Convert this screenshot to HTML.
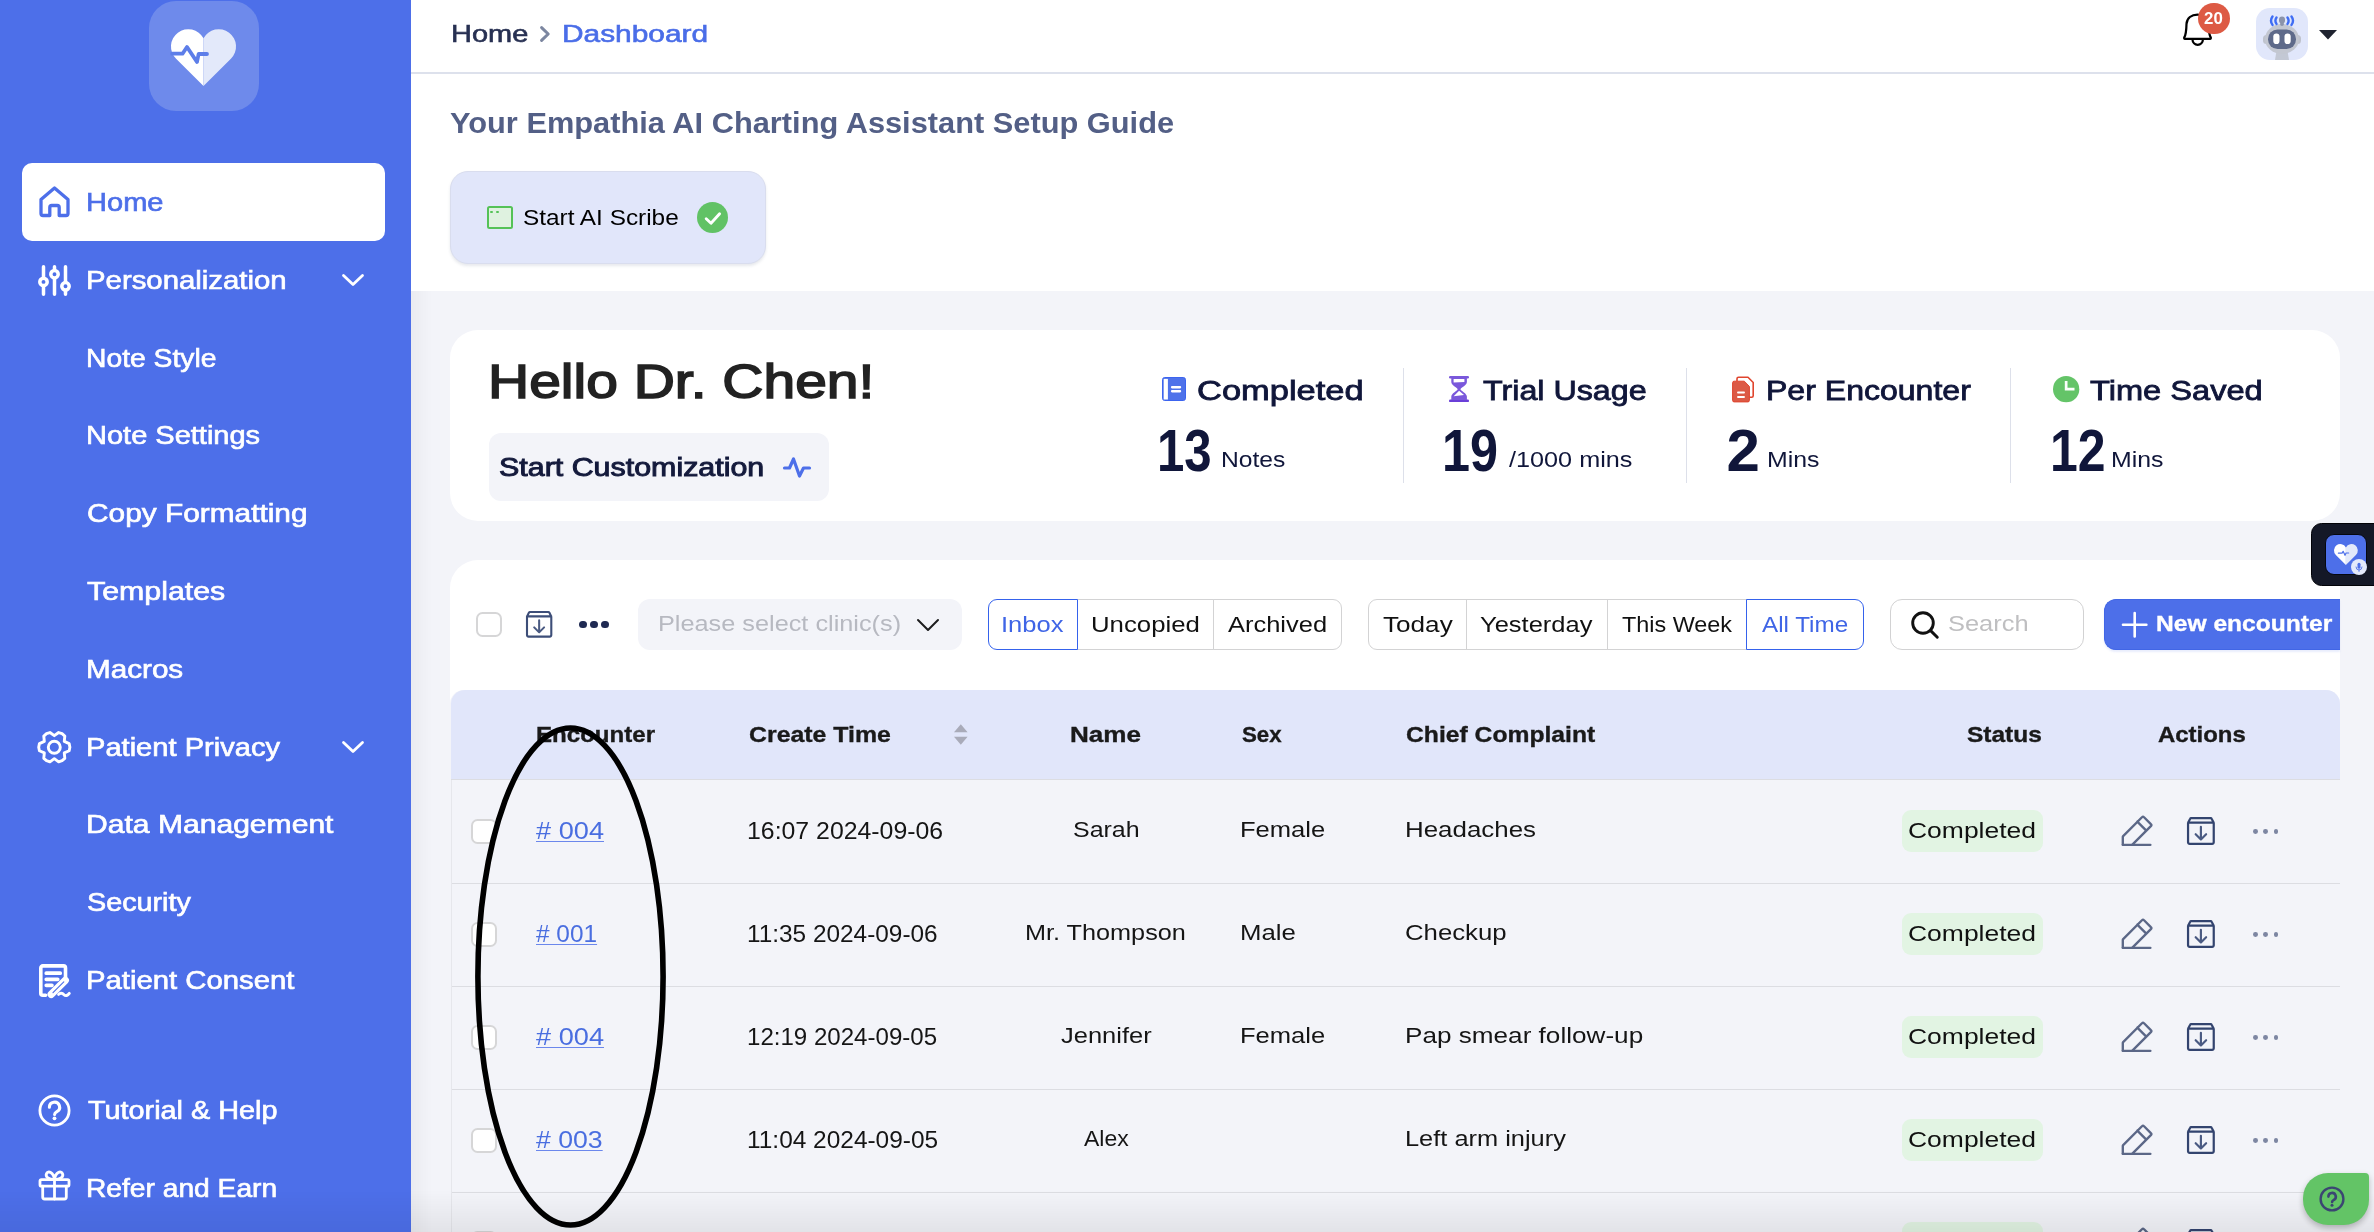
<!DOCTYPE html>
<html lang="en"><head><meta charset="utf-8"><title>Dashboard</title>
<style>
*{box-sizing:border-box;margin:0;padding:0}
html,body{width:2374px;height:1232px;overflow:hidden;background:#f3f4f9;font-family:"Liberation Sans",sans-serif;}
body{position:relative}
.a{position:absolute}
.t{position:absolute;white-space:nowrap;line-height:1;display:block;transform-origin:0 0}
svg{position:absolute;overflow:visible}
.side{left:0;top:0;width:410.8px;height:1232px;background:#4d6fe9}
.cb{position:absolute;width:25.2px;height:25.2px;border:2px solid #d6d6d7;border-radius:6.5px;background:#fff}
.badge{position:absolute;left:1902px;width:141px;height:42px;border-radius:9px;background:#e2f4e3}
.sep{position:absolute;left:451.5px;width:1888.5px;height:1.5px;background:#dcdde2}
.tab{position:absolute;top:599px;height:51px;border:1.9px solid #d3d3d4;background:#fff}
.tab.on{border-color:#3562ec;z-index:2}
.div{position:absolute;top:368px;width:1.3px;height:115px;background:#dde0ea}

#app{position:absolute;left:0;top:0;width:2374px;height:1232px;overflow:hidden;will-change:transform}

</style></head>
<body>
<div id="app">
<div class="a" style="left:410px;top:0;width:1964px;height:291px;background:#fff"></div><div class="a" style="left:410px;top:72px;width:1964px;height:1.5px;background:#dde1ec"></div><div class="a" style="left:410px;top:291px;width:22px;height:941px;background:linear-gradient(90deg,rgba(0,0,0,.035),rgba(0,0,0,0))"></div><div class="a side"></div><div class="a" style="left:148.5px;top:1px;width:110px;height:110px;border-radius:27px;background:#6e8aeb"></div><svg style="left:171px;top:28.5px" width="65" height="57" viewBox="0 0 65 57"><path d="M32.5 57 L5.1 29.8 A17.3 17.3 0 1 1 32.5 9.3 Z" fill="#fff"/><path d="M32.5 57 L59.9 29.8 A17.3 17.3 0 1 0 32.5 9.3 Z" fill="#e3e9fa"/><path d="M1.2 24.7 H11.5 L16 18 L26 33 L27.6 25 H36" fill="none" stroke="#5d7ee9" stroke-width="3.8" stroke-linecap="round" stroke-linejoin="round"/></svg><div class="a" style="left:22px;top:163px;width:363px;height:78px;border-radius:10px;background:#fff"></div><span class="t" style="left:86.12px;top:190.01px;font-size:25.5px;font-weight:400;color:#4d6fe9;transform:scaleX(1.1391);-webkit-text-stroke:0.65px #4d6fe9;">Home</span><span class="t" style="left:86.10px;top:267.81px;font-size:25.5px;font-weight:400;color:#fff;transform:scaleX(1.1509);-webkit-text-stroke:0.65px #fff;">Personalization</span><span class="t" style="left:86.18px;top:345.61px;font-size:25.5px;font-weight:400;color:#fff;transform:scaleX(1.1086);-webkit-text-stroke:0.65px #fff;">Note Style</span><span class="t" style="left:86.13px;top:423.41px;font-size:25.5px;font-weight:400;color:#fff;transform:scaleX(1.1374);-webkit-text-stroke:0.65px #fff;">Note Settings</span><span class="t" style="left:87.23px;top:501.21px;font-size:25.5px;font-weight:400;color:#fff;transform:scaleX(1.1701);-webkit-text-stroke:0.65px #fff;">Copy Formatting</span><span class="t" style="left:87.10px;top:579.01px;font-size:25.5px;font-weight:400;color:#fff;transform:scaleX(1.1891);-webkit-text-stroke:0.65px #fff;">Templates</span><span class="t" style="left:86.07px;top:656.81px;font-size:25.5px;font-weight:400;color:#fff;transform:scaleX(1.1627);-webkit-text-stroke:0.65px #fff;">Macros</span><span class="t" style="left:86.12px;top:734.61px;font-size:25.5px;font-weight:400;color:#fff;transform:scaleX(1.1407);-webkit-text-stroke:0.65px #fff;">Patient Privacy</span><span class="t" style="left:86.04px;top:812.41px;font-size:25.5px;font-weight:400;color:#fff;transform:scaleX(1.1796);-webkit-text-stroke:0.65px #fff;">Data Management</span><span class="t" style="left:87.27px;top:890.21px;font-size:25.5px;font-weight:400;color:#fff;transform:scaleX(1.1274);-webkit-text-stroke:0.65px #fff;">Security</span><span class="t" style="left:86.10px;top:968.01px;font-size:25.5px;font-weight:400;color:#fff;transform:scaleX(1.1485);-webkit-text-stroke:0.65px #fff;">Patient Consent</span><span class="t" style="left:87.70px;top:1098.31px;font-size:25.5px;font-weight:400;color:#fff;transform:scaleX(1.1300);-webkit-text-stroke:0.65px #fff;">Tutorial &amp; Help</span><span class="t" style="left:86.19px;top:1176.11px;font-size:25.5px;font-weight:400;color:#fff;transform:scaleX(1.1051);-webkit-text-stroke:0.65px #fff;">Refer and Earn</span><svg style="left:39px;top:185.5px" width="31" height="31.5" viewBox="0 0 31 31.5"><path d="M2 13.5 L15.5 2 L29 13.5 V27.5 a2 2 0 0 1 -2 2 H20.2 V21.5 a2 2 0 0 0 -2 -2 H12.8 a2 2 0 0 0 -2 2 V29.5 H4 a2 2 0 0 1 -2 -2 Z" fill="none" stroke="#4d6fe9" stroke-width="3.3" stroke-linejoin="round" stroke-linecap="round"/></svg><svg style="left:38px;top:264.5px" width="33" height="31" viewBox="0 0 33 31" fill="none" stroke="#fff" stroke-width="3.5" stroke-linecap="round"><path d="M5.5 1.8V12.4M5.5 21.4V29.2M16.5 1.8V4.6M16.5 13.8V29.2M27.5 1.8V16.8M27.5 25.8V29.2"/><circle cx="5.5" cy="16.9" r="3.7"/><circle cx="16.5" cy="9.2" r="3.7"/><circle cx="27.5" cy="21.3" r="3.7"/></svg><svg style="left:342px;top:273.7px" width="22" height="12" viewBox="0 0 22 12"><path d="M1.5 1.5 L11 10.5 L20.5 1.5" fill="none" stroke="#fff" stroke-width="2.8" stroke-linecap="round" stroke-linejoin="round"/></svg><svg style="left:342px;top:740.5px" width="22" height="12" viewBox="0 0 22 12"><path d="M1.5 1.5 L11 10.5 L20.5 1.5" fill="none" stroke="#fff" stroke-width="2.8" stroke-linecap="round" stroke-linejoin="round"/></svg><svg style="left:36.9px;top:730.8px" width="34.6" height="32.4" viewBox="0 0 34.6 32.4" fill="none" stroke="#fff" stroke-width="2.9" stroke-linejoin="round"><path d="M32.18 12.63 L32.90 16.20 L32.18 19.77 L27.26 21.95 L27.83 27.30 L25.10 29.71 L21.65 30.87 L17.30 27.70 L12.95 30.87 L9.50 29.71 L6.77 27.30 L7.34 21.95 L2.42 19.77 L1.70 16.20 L2.42 12.63 L7.34 10.45 L6.77 5.10 L9.50 2.69 L12.95 1.53 L17.30 4.70 L21.65 1.53 L25.10 2.69 L27.83 5.10 L27.26 10.45Z"/><circle cx="17.30" cy="16.20" r="6"/></svg><svg style="left:38.9px;top:963.9px" width="32" height="35" viewBox="0 0 32 35" fill="none" stroke="#fff" stroke-linecap="round" stroke-linejoin="round"><path d="M6.6 31.2 H3.8 a2 2 0 0 1 -2 -2 V3.9 a2 2 0 0 1 2 -2 H24.5 a2 2 0 0 1 2 2 V13.6" stroke-width="3.6"/><path d="M7.3 9.2 H21.2 M7.3 15.3 H18.7 M7.3 21.3 H12.9" stroke-width="3.8"/><path d="M26.3 16.3 L12.2 30.4" stroke-width="7.3"/><path d="M24.8 17.8 L14 28.6" stroke="#4d6fe9" stroke-width="1.1"/><path d="M19.6 30.4 C21 28.8 23.3 28.9 25 30.7 C26.7 32.4 28.6 31.6 30.3 29.3" stroke-width="2.9"/></svg><svg style="left:38px;top:1094px" width="33" height="33" viewBox="0 0 33 33" fill="none" stroke="#fff" stroke-linecap="round"><circle cx="16.5" cy="16.5" r="14.6" stroke-width="2.8"/><path d="M11.4 13.2 A5.1 5.1 0 1 1 18.9 17.7 Q16.6 19 16.6 20.4" stroke-width="3.1"/><circle cx="16.5" cy="24.3" r="1.9" fill="#fff" stroke="none"/></svg><svg style="left:38px;top:1170.4px" width="33" height="33" viewBox="0 0 33 33" fill="none" stroke="#fff" stroke-width="2.8" stroke-linejoin="round" stroke-linecap="round"><rect x="2" y="9.6" width="29" height="6.6" rx="1.5"/><path d="M4.7 16.2 V27 a2 2 0 0 0 2 2 H26.3 a2 2 0 0 0 2 -2 V16.2"/><path d="M16.5 9.6 V29"/><path d="M16.5 9.6 C11 9.6 7 7 8.5 3.6 C10 0.4 15.5 1.8 16.5 9.6 C17.5 1.8 23 0.4 24.5 3.6 C26 7 22 9.6 16.5 9.6Z"/></svg><span class="t" style="left:450.79px;top:21.78px;font-size:24px;font-weight:400;color:#273052;transform:scaleX(1.2063);-webkit-text-stroke:0.6px #273052;">Home</span><svg style="left:540.2px;top:25.6px" width="10" height="16" viewBox="0 0 10 16"><path d="M1.6 1.6 L8.2 8 L1.6 14.4" fill="none" stroke="#7c86a0" stroke-width="3" stroke-linecap="round" stroke-linejoin="round"/></svg><span class="t" style="left:562.16px;top:21.78px;font-size:24px;font-weight:400;color:#4a6de8;transform:scaleX(1.2437);-webkit-text-stroke:0.6px #4a6de8;">Dashboard</span><svg style="left:2183px;top:13px" width="30" height="33" viewBox="0 0 30 33" fill="none" stroke="#000" stroke-width="2.25" stroke-linecap="round" stroke-linejoin="round"><path d="M2 25.9 C1.2 25.9 0.9 25 1.4 24.2 C3.2 21 3.4 15 3.5 11 C3.8 5 8.5 1.5 14.5 1.5 C20.5 1.5 25.2 5 25.5 11 C25.6 15 25.8 21 27.6 24.2 C28.1 25 27.8 25.9 27 25.9 Z"/><path d="M9.5 26.6 a5.2 5.2 0 0 0 10.4 0"/></svg><div class="a" style="left:2198.1px;top:2.5px;width:31.6px;height:31.6px;border-radius:50%;background:#dd5a44"></div><span class="t" style="left:2204.40px;top:10.11px;font-size:17px;font-weight:700;color:#fff;transform:scaleX(0.9916);">20</span><div class="a" style="left:2256px;top:7.5px;width:52px;height:52px;border-radius:14px;background:#e1e7fb;overflow:hidden"><svg style="left:0;top:0" width="52" height="52" viewBox="0 0 52 52"><path d="M19 52 L20.5 43 H31.5 L33 52Z" fill="#c3c8d4"/><rect x="7" y="27" width="38" height="9" rx="3.5" fill="#bfc3cd"/><ellipse cx="26" cy="31" rx="17" ry="15" fill="#c3c7d1"/><rect x="12" y="21.5" width="28" height="19.5" rx="9.5" fill="#5e6a8a"/><rect x="17.3" y="25.5" width="6.2" height="10.5" rx="3.1" fill="#fff"/><rect x="28.5" y="25.5" width="6.2" height="10.5" rx="3.1" fill="#fff"/><rect x="24.2" y="9" width="3.6" height="9" rx="1.8" fill="#8b93aa"/><rect x="23" y="8.5" width="6" height="7" rx="3" fill="#8b93aa"/><path d="M20.5 9.5 q-2.2 3.2 0 6.4 M16.5 8.5 q-3 4.2 0 8.4 M31.5 9.5 q2.2 3.2 0 6.4 M35.5 8.5 q3 4.2 0 8.4" fill="none" stroke="#3f6df4" stroke-width="2.4" stroke-linecap="round"/></svg></div><svg style="left:2318.5px;top:29.8px" width="18" height="9.5" viewBox="0 0 18 9.5"><path d="M0 0 H18 L9 9.5Z" fill="#1f2330"/></svg><span class="t" style="left:450.40px;top:108.55px;font-size:29px;font-weight:700;color:#535f86;transform:scaleX(1.0615);">Your Empathia AI Charting Assistant Setup Guide</span><div class="a" style="left:450px;top:171px;width:316px;height:93px;border-radius:18px;background:#e1e6fa;border:1px solid #d9ddee;box-shadow:0 2px 3px rgba(60,70,110,.12)"></div><div class="a" style="left:487.2px;top:206.4px;width:26.1px;height:22.2px;border:2.1px solid #55c257;border-radius:2.5px;background:#dff2e0"></div><div class="a" style="left:490.4px;top:210.7px;width:2.6px;height:2.4px;border-radius:1px;background:#55c257"></div><div class="a" style="left:496.2px;top:210.7px;width:2.6px;height:2.4px;border-radius:1px;background:#55c257"></div><span class="t" style="left:522.79px;top:206.88px;font-size:22px;font-weight:400;color:#000;transform:scaleX(1.1074);">Start AI Scribe</span><div class="a" style="left:696.7px;top:201.7px;width:31.8px;height:31.8px;border-radius:50%;background:#61c265"></div><svg style="left:696.7px;top:201.7px" width="32" height="32" viewBox="0 0 32 32"><path d="M9.2 16.8 L14 21.2 L22.6 11.8" fill="none" stroke="#fff" stroke-width="2.9" stroke-linecap="round" stroke-linejoin="round"/></svg><div class="a" style="left:450px;top:329.5px;width:1890px;height:191px;border-radius:28px;background:#fff"></div><span class="t" style="left:487.65px;top:357.22px;font-size:49px;font-weight:400;color:#222;transform:scaleX(1.1628);-webkit-text-stroke:1.6px #222;">Hello Dr. Chen!</span><div class="a" style="left:489px;top:433.3px;width:340px;height:68px;border-radius:12px;background:#f3f4f9"></div><span class="t" style="left:498.73px;top:453.89px;font-size:26px;font-weight:400;color:#141a3c;transform:scaleX(1.1693);-webkit-text-stroke:0.95px #141a3c;">Start Customization</span><svg style="left:783px;top:457px" width="28" height="21" viewBox="0 0 28 21"><path d="M1.5 11 H6.5 L10.5 2 L16.5 19 L20.5 11 H26.5" fill="none" stroke="#4d6fe9" stroke-width="3.2" stroke-linecap="round" stroke-linejoin="round"/></svg><div class="div" style="left:1402.6px"></div><div class="div" style="left:1686px"></div><div class="div" style="left:2009.8px"></div><span class="t" style="left:1196.95px;top:377.02px;font-size:27.5px;font-weight:400;color:#10163a;transform:scaleX(1.2533);-webkit-text-stroke:0.8px #10163a;">Completed</span><span class="t" style="left:1483.00px;top:377.02px;font-size:27.5px;font-weight:400;color:#10163a;transform:scaleX(1.1724);-webkit-text-stroke:0.8px #10163a;">Trial Usage</span><span class="t" style="left:1765.67px;top:377.02px;font-size:27.5px;font-weight:400;color:#10163a;transform:scaleX(1.1651);-webkit-text-stroke:0.8px #10163a;">Per Encounter</span><span class="t" style="left:2090.40px;top:377.02px;font-size:27.5px;font-weight:400;color:#10163a;transform:scaleX(1.1855);-webkit-text-stroke:0.8px #10163a;">Time Saved</span><span class="t" style="left:1157.34px;top:420.51px;font-size:60px;font-weight:700;color:#10163a;transform:scaleX(0.8193);">13</span><span class="t" style="left:1442.18px;top:420.51px;font-size:60px;font-weight:700;color:#10163a;transform:scaleX(0.8386);">19</span><span class="t" style="left:1726.40px;top:420.51px;font-size:60px;font-weight:700;color:#10163a;">2</span><span class="t" style="left:2049.50px;top:420.51px;font-size:60px;font-weight:700;color:#10163a;transform:scaleX(0.8327);">12</span><span class="t" style="left:1221.10px;top:448.85px;font-size:22.5px;font-weight:400;color:#10163a;transform:scaleX(1.0951);">Notes</span><span class="t" style="left:1509.10px;top:448.85px;font-size:22.5px;font-weight:400;color:#10163a;transform:scaleX(1.1210);">/1000 mins</span><span class="t" style="left:1766.50px;top:448.85px;font-size:22.5px;font-weight:400;color:#10163a;transform:scaleX(1.1047);">Mins</span><span class="t" style="left:2111.10px;top:448.85px;font-size:22.5px;font-weight:400;color:#10163a;transform:scaleX(1.1047);">Mins</span><svg style="left:1162px;top:377.2px" width="24" height="24" viewBox="0 0 24 24"><rect x="0.5" y="0.5" width="23" height="23" rx="2.2" fill="#4e72ea" stroke="#3c64ef" stroke-width="1"/><rect x="1.7" y="1.9" width="4.2" height="20.6" fill="#fff"/><rect x="8.9" y="9.1" width="10.3" height="2.3" rx="1.1" fill="#fff"/><rect x="8.9" y="13.1" width="10.3" height="2.3" rx="1.1" fill="#fff"/></svg><svg style="left:1449.1px;top:376px" width="20" height="26.1" viewBox="0 0 20 26.1"><rect x="0" y="0" width="20" height="2.5" rx="1.2" fill="#7a58db"/><rect x="0" y="23.6" width="20" height="2.5" rx="1.2" fill="#6a3fd8"/><path d="M2.3 2 H17.9 V6 C17.9 9.2 12.2 11.6 11.4 13.2 C12.2 14.9 17.9 17.4 17.9 20.6 V24 H2.3 V20.6 C2.3 17.4 8 14.9 8.7 13.2 C8 11.6 2.3 9.2 2.3 6 Z" fill="#7a58db"/><path d="M4.6 3 H15.4 V6 L4.6 6.6 Z" fill="#fff"/><path d="M10.1 14.8 L15 19 L4.6 20.2 Z" fill="#fff"/></svg><svg style="left:1732px;top:376px" width="22.5" height="26.5" viewBox="0 0 22.5 26.5"><path d="M5 5 V2.7 a1.5 1.5 0 0 1 1.5 -1.5 H16 L21.2 6.5 V19.7 a1.5 1.5 0 0 1 -1.5 1.5 H17.5" fill="none" stroke="#e0452e" stroke-width="1.6" stroke-linejoin="round"/><path d="M0.6 6.7 a1.5 1.5 0 0 1 1.5 -1.5 H12.3 L17.4 10.4 V24.4 a1.5 1.5 0 0 1 -1.5 1.5 H2.1 a1.5 1.5 0 0 1 -1.5 -1.5Z" fill="#dc5a46" stroke="#e0452e" stroke-width="1"/><rect x="5.1" y="15.5" width="7.8" height="2.1" rx="0.8" fill="#fff"/><rect x="5.1" y="19.9" width="7.8" height="2.1" rx="0.8" fill="#fff"/></svg><svg style="left:2053.3px;top:376.2px" width="26.3" height="26.3" viewBox="0 0 26.3 26.3"><circle cx="13.15" cy="13.15" r="13.15" fill="#64c468"/><path d="M11.8 5 H14.5 V11.8 H21.5 V14.5 H11.8Z" fill="#fbfffb"/></svg><div class="a" style="left:450px;top:560px;width:1890px;height:700px;border-radius:28px 28px 0 0;background:#fff"></div><div class="a" style="left:450px;top:690px;width:1890px;height:560px;border-radius:14px 14px 0 0;background:#f3f4f9"></div><div class="a" style="left:451px;top:690px;width:1889px;height:90px;border-radius:14px 14px 0 0;background:#e1e6fa;border-bottom:1.5px solid #dcdde2"></div><div class="a" style="left:450.6px;top:780px;width:1.2px;height:460px;background:#e6e7ec"></div><div class="cb" style="left:476.4px;top:611.7px"></div><svg style="left:526px;top:611.2px" width="26.3" height="26.6" viewBox="0 0 26.3 26.6"><path d="M1 5.4 H25.3 V24.1 a1.5 1.5 0 0 1 -1.5 1.5 H2.5 a1.5 1.5 0 0 1 -1.5 -1.5Z M1 5.4 L3 1.6 a1 1 0 0 1 .9 -.6 H22.4 a1 1 0 0 1 .9 .6 L25.3 5.4" fill="none" stroke="#3d4e78" stroke-width="2.1" stroke-linejoin="round"/><path d="M13.15 9.3 V21.2 M8.2 16.4 L13.15 21.4 L18.1 16.4" fill="none" stroke="#4a5a82" stroke-width="2.05" stroke-linecap="round" stroke-linejoin="round"/></svg><div class="a" style="left:579.2px;top:620.5px;width:7.8px;height:7.8px;border-radius:50%;background:#1f2a52"></div><div class="a" style="left:590.2px;top:620.5px;width:7.8px;height:7.8px;border-radius:50%;background:#1f2a52"></div><div class="a" style="left:601.4px;top:620.5px;width:7.8px;height:7.8px;border-radius:50%;background:#1f2a52"></div><div class="a" style="left:638px;top:598.8px;width:324px;height:51.5px;border-radius:12px;background:#f3f4f9"></div><span class="t" style="left:658.25px;top:613.28px;font-size:22px;font-weight:400;color:#b7b9c1;transform:scaleX(1.1492);">Please select clinic(s)</span><svg style="left:917.4px;top:619.3px" width="22" height="12" viewBox="0 0 22 12"><path d="M1 1 L11 11 L21 1" fill="none" stroke="#1d1d1f" stroke-width="2" stroke-linecap="round" stroke-linejoin="round"/></svg><div class="tab" style="left:1077px;width:137.5px;border-left:none"></div><div class="tab" style="left:1213px;width:128.5px;border-radius:0 9px 9px 0"></div><div class="tab on" style="left:988.4px;width:90px;border-radius:9px 0 0 9px"></div><span class="t" style="left:1000.78px;top:613.88px;font-size:22px;font-weight:400;color:#3f65e6;transform:scaleX(1.1598);z-index:3;">Inbox</span><span class="t" style="left:1091.03px;top:613.88px;font-size:22px;font-weight:400;color:#111;transform:scaleX(1.1707);z-index:3;">Uncopied</span><span class="t" style="left:1228.00px;top:613.88px;font-size:22px;font-weight:400;color:#111;transform:scaleX(1.1570);z-index:3;">Archived</span><div class="tab" style="left:1368.3px;width:99px;border-radius:9px 0 0 9px"></div><div class="tab" style="left:1466px;width:142px;border-left-width:1.5px"></div><div class="tab" style="left:1606.5px;width:141px"></div><div class="tab on" style="left:1746.2px;width:118.1px;border-radius:0 9px 9px 0"></div><span class="t" style="left:1382.70px;top:613.88px;font-size:22px;font-weight:400;color:#111;transform:scaleX(1.1873);z-index:3;">Today</span><span class="t" style="left:1480.20px;top:613.88px;font-size:22px;font-weight:400;color:#111;transform:scaleX(1.1584);z-index:3;">Yesterday</span><span class="t" style="left:1621.80px;top:613.88px;font-size:22px;font-weight:400;color:#111;transform:scaleX(1.0630);z-index:3;">This Week</span><span class="t" style="left:1761.60px;top:613.88px;font-size:22px;font-weight:400;color:#3f65e6;transform:scaleX(1.1008);z-index:3;">All Time</span><div class="a" style="left:1890px;top:599px;width:194px;height:51px;border-radius:12px;border:1.9px solid #d2d2d3;background:#fff"></div><svg style="left:1911.3px;top:611.3px" width="28" height="28" viewBox="0 0 28 28" fill="none" stroke="#111" stroke-width="2.9" stroke-linecap="round"><circle cx="12" cy="12" r="10.3"/><path d="M19.6 19.6 L26.3 26.3"/></svg><span class="t" style="left:1947.74px;top:613.38px;font-size:22px;font-weight:400;color:#bfbfc1;transform:scaleX(1.1561);">Search</span><div class="a" style="left:2104px;top:599px;width:236px;height:51px;border-radius:12px 0 0 12px;background:#4d6fe9;border:1.2px solid #4166e6;border-right:none;box-shadow:0 2px 2px rgba(77,111,233,.12)"></div><svg style="left:2121.8px;top:612.2px" width="25.4" height="25.4" viewBox="0 0 25.4 25.4"><path d="M12.7 1 V24.4 M1 12.7 H24.4" fill="none" stroke="#fff" stroke-width="2.6" stroke-linecap="round"/></svg><span class="t" style="left:2156.38px;top:612.98px;font-size:22px;font-weight:700;color:#fff;transform:scaleX(1.1175);-webkit-text-stroke:0.35px #fff;">New encounter</span><span class="t" style="left:535.91px;top:723.88px;font-size:22px;font-weight:700;color:#1a1a1a;transform:scaleX(1.0940);-webkit-text-stroke:0.35px #1a1a1a;">Encounter</span><span class="t" style="left:748.50px;top:723.88px;font-size:22px;font-weight:700;color:#1a1a1a;transform:scaleX(1.1300);-webkit-text-stroke:0.35px #1a1a1a;">Create Time</span><span class="t" style="left:1069.61px;top:723.88px;font-size:22px;font-weight:700;color:#1a1a1a;transform:scaleX(1.1860);-webkit-text-stroke:0.35px #1a1a1a;">Name</span><span class="t" style="left:1241.50px;top:723.88px;font-size:22px;font-weight:700;color:#1a1a1a;transform:scaleX(1.0123);-webkit-text-stroke:0.35px #1a1a1a;">Sex</span><span class="t" style="left:1406.00px;top:723.88px;font-size:22px;font-weight:700;color:#1a1a1a;transform:scaleX(1.1220);-webkit-text-stroke:0.35px #1a1a1a;">Chief Complaint</span><span class="t" style="left:1967.40px;top:723.88px;font-size:22px;font-weight:700;color:#1a1a1a;transform:scaleX(1.1134);-webkit-text-stroke:0.35px #1a1a1a;">Status</span><span class="t" style="left:2157.50px;top:723.88px;font-size:22px;font-weight:700;color:#1a1a1a;transform:scaleX(1.0878);-webkit-text-stroke:0.35px #1a1a1a;">Actions</span><svg style="left:953.7px;top:723.9px" width="13.6" height="21" viewBox="0 0 14 21"><path d="M7 0 L14 8.2 H0Z" fill="#a9abb9"/><path d="M7 21 L14 12.8 H0Z" fill="#a9abb9"/></svg><div class="cb" style="left:471.4px;top:818.7px"></div><span class="t" style="left:536.20px;top:819.28px;font-size:24px;font-weight:400;color:#4a6ee0;transform:scaleX(1.1321);text-decoration:underline;text-decoration-thickness:1.3px;text-underline-offset:2px;text-decoration-color:#6b87ec;"># 004</span><span class="t" style="left:747.44px;top:819.51px;font-size:23.5px;font-weight:400;color:#151515;transform:scaleX(1.0571);">16:07 2024-09-06</span><span class="t" style="left:1072.90px;top:820.30px;font-size:21.5px;font-weight:400;color:#151515;transform:scaleX(1.1610);">Sarah</span><span class="t" style="left:1240.31px;top:820.30px;font-size:21.5px;font-weight:400;color:#151515;transform:scaleX(1.1888);">Female</span><span class="t" style="left:1404.80px;top:820.30px;font-size:21.5px;font-weight:400;color:#151515;transform:scaleX(1.2044);">Headaches</span><div class="badge" style="top:809.8px"></div><span class="t" style="left:1908.40px;top:820.48px;font-size:22px;font-weight:400;color:#111;transform:scaleX(1.2030);">Completed</span><svg style="left:2120.5px;top:814.8px" width="32" height="31" viewBox="0 0 32 31"><path d="M1.8 29.8 H29.4" fill="none" stroke="#5b6787" stroke-width="2.35" stroke-linecap="round"/><path d="M1.8 29.6 V22 a1.2 1.2 0 0 1 .35 -.85 L21.2 2 a1.1 1.1 0 0 1 1.6 0 L30.1 9.3 a1.1 1.1 0 0 1 0 1.6 L11.4 29.6 M16.3 6.6 L25.3 15.6" fill="none" stroke="#5b6787" stroke-width="2.35" stroke-linejoin="round" stroke-linecap="round"/></svg><svg style="left:2187.2px;top:817.2px" width="27.8" height="27.9" viewBox="0 0 26.3 26.6" preserveAspectRatio="none"><path d="M1 5.4 H25.3 V24.1 a1.5 1.5 0 0 1 -1.5 1.5 H2.5 a1.5 1.5 0 0 1 -1.5 -1.5Z M1 5.4 L3 1.6 a1 1 0 0 1 .9 -.6 H22.4 a1 1 0 0 1 .9 .6 L25.3 5.4" fill="none" stroke="#33446f" stroke-width="2.1" stroke-linejoin="round"/><path d="M13.15 9.3 V21.2 M8.2 16.4 L13.15 21.4 L18.1 16.4" fill="none" stroke="#4a5a82" stroke-width="2.05" stroke-linecap="round" stroke-linejoin="round"/></svg><div class="a" style="left:2253.0px;top:828.9px;width:4.8px;height:4.8px;border-radius:50%;background:#7d86a2"></div><div class="a" style="left:2263.4px;top:828.9px;width:4.8px;height:4.8px;border-radius:50%;background:#7d86a2"></div><div class="a" style="left:2273.7px;top:828.9px;width:4.8px;height:4.8px;border-radius:50%;background:#7d86a2"></div><div class="sep" style="top:882.7px"></div><div class="cb" style="left:471.4px;top:921.7px"></div><span class="t" style="left:536.20px;top:922.28px;font-size:24px;font-weight:400;color:#4a6ee0;transform:scaleX(1.0166);text-decoration:underline;text-decoration-thickness:1.3px;text-underline-offset:2px;text-decoration-color:#6b87ec;"># 001</span><span class="t" style="left:747.46px;top:922.51px;font-size:23.5px;font-weight:400;color:#151515;transform:scaleX(1.0370);">11:35 2024-09-06</span><span class="t" style="left:1024.83px;top:923.30px;font-size:21.5px;font-weight:400;color:#151515;transform:scaleX(1.1739);">Mr. Thompson</span><span class="t" style="left:1240.30px;top:923.30px;font-size:21.5px;font-weight:400;color:#151515;transform:scaleX(1.1984);">Male</span><span class="t" style="left:1404.80px;top:923.30px;font-size:21.5px;font-weight:400;color:#151515;transform:scaleX(1.1979);">Checkup</span><div class="badge" style="top:912.8px"></div><span class="t" style="left:1908.40px;top:923.48px;font-size:22px;font-weight:400;color:#111;transform:scaleX(1.2030);">Completed</span><svg style="left:2120.5px;top:917.8px" width="32" height="31" viewBox="0 0 32 31"><path d="M1.8 29.8 H29.4" fill="none" stroke="#5b6787" stroke-width="2.35" stroke-linecap="round"/><path d="M1.8 29.6 V22 a1.2 1.2 0 0 1 .35 -.85 L21.2 2 a1.1 1.1 0 0 1 1.6 0 L30.1 9.3 a1.1 1.1 0 0 1 0 1.6 L11.4 29.6 M16.3 6.6 L25.3 15.6" fill="none" stroke="#5b6787" stroke-width="2.35" stroke-linejoin="round" stroke-linecap="round"/></svg><svg style="left:2187.2px;top:920.2px" width="27.8" height="27.9" viewBox="0 0 26.3 26.6" preserveAspectRatio="none"><path d="M1 5.4 H25.3 V24.1 a1.5 1.5 0 0 1 -1.5 1.5 H2.5 a1.5 1.5 0 0 1 -1.5 -1.5Z M1 5.4 L3 1.6 a1 1 0 0 1 .9 -.6 H22.4 a1 1 0 0 1 .9 .6 L25.3 5.4" fill="none" stroke="#33446f" stroke-width="2.1" stroke-linejoin="round"/><path d="M13.15 9.3 V21.2 M8.2 16.4 L13.15 21.4 L18.1 16.4" fill="none" stroke="#4a5a82" stroke-width="2.05" stroke-linecap="round" stroke-linejoin="round"/></svg><div class="a" style="left:2253.0px;top:931.9px;width:4.8px;height:4.8px;border-radius:50%;background:#7d86a2"></div><div class="a" style="left:2263.4px;top:931.9px;width:4.8px;height:4.8px;border-radius:50%;background:#7d86a2"></div><div class="a" style="left:2273.7px;top:931.9px;width:4.8px;height:4.8px;border-radius:50%;background:#7d86a2"></div><div class="sep" style="top:985.7px"></div><div class="cb" style="left:471.4px;top:1024.7px"></div><span class="t" style="left:536.20px;top:1025.28px;font-size:24px;font-weight:400;color:#4a6ee0;transform:scaleX(1.1321);text-decoration:underline;text-decoration-thickness:1.3px;text-underline-offset:2px;text-decoration-color:#6b87ec;"># 004</span><span class="t" style="left:747.48px;top:1025.51px;font-size:23.5px;font-weight:400;color:#151515;transform:scaleX(1.0245);">12:19 2024-09-05</span><span class="t" style="left:1060.50px;top:1026.30px;font-size:21.5px;font-weight:400;color:#151515;transform:scaleX(1.1857);">Jennifer</span><span class="t" style="left:1240.31px;top:1026.30px;font-size:21.5px;font-weight:400;color:#151515;transform:scaleX(1.1888);">Female</span><span class="t" style="left:1404.78px;top:1026.30px;font-size:21.5px;font-weight:400;color:#151515;transform:scaleX(1.2153);">Pap smear follow-up</span><div class="badge" style="top:1015.8px"></div><span class="t" style="left:1908.40px;top:1026.48px;font-size:22px;font-weight:400;color:#111;transform:scaleX(1.2030);">Completed</span><svg style="left:2120.5px;top:1020.8px" width="32" height="31" viewBox="0 0 32 31"><path d="M1.8 29.8 H29.4" fill="none" stroke="#5b6787" stroke-width="2.35" stroke-linecap="round"/><path d="M1.8 29.6 V22 a1.2 1.2 0 0 1 .35 -.85 L21.2 2 a1.1 1.1 0 0 1 1.6 0 L30.1 9.3 a1.1 1.1 0 0 1 0 1.6 L11.4 29.6 M16.3 6.6 L25.3 15.6" fill="none" stroke="#5b6787" stroke-width="2.35" stroke-linejoin="round" stroke-linecap="round"/></svg><svg style="left:2187.2px;top:1023.2px" width="27.8" height="27.9" viewBox="0 0 26.3 26.6" preserveAspectRatio="none"><path d="M1 5.4 H25.3 V24.1 a1.5 1.5 0 0 1 -1.5 1.5 H2.5 a1.5 1.5 0 0 1 -1.5 -1.5Z M1 5.4 L3 1.6 a1 1 0 0 1 .9 -.6 H22.4 a1 1 0 0 1 .9 .6 L25.3 5.4" fill="none" stroke="#33446f" stroke-width="2.1" stroke-linejoin="round"/><path d="M13.15 9.3 V21.2 M8.2 16.4 L13.15 21.4 L18.1 16.4" fill="none" stroke="#4a5a82" stroke-width="2.05" stroke-linecap="round" stroke-linejoin="round"/></svg><div class="a" style="left:2253.0px;top:1034.9px;width:4.8px;height:4.8px;border-radius:50%;background:#7d86a2"></div><div class="a" style="left:2263.4px;top:1034.9px;width:4.8px;height:4.8px;border-radius:50%;background:#7d86a2"></div><div class="a" style="left:2273.7px;top:1034.9px;width:4.8px;height:4.8px;border-radius:50%;background:#7d86a2"></div><div class="sep" style="top:1088.7px"></div><div class="cb" style="left:471.4px;top:1127.7px"></div><span class="t" style="left:536.20px;top:1128.28px;font-size:24px;font-weight:400;color:#4a6ee0;transform:scaleX(1.1103);text-decoration:underline;text-decoration-thickness:1.3px;text-underline-offset:2px;text-decoration-color:#6b87ec;"># 003</span><span class="t" style="left:747.46px;top:1128.51px;font-size:23.5px;font-weight:400;color:#151515;transform:scaleX(1.0398);">11:04 2024-09-05</span><span class="t" style="left:1083.50px;top:1129.30px;font-size:21.5px;font-weight:400;color:#151515;transform:scaleX(1.0695);">Alex</span><span class="t" style="left:1404.82px;top:1129.30px;font-size:21.5px;font-weight:400;color:#151515;transform:scaleX(1.1811);">Left arm injury</span><div class="badge" style="top:1118.8px"></div><span class="t" style="left:1908.40px;top:1129.48px;font-size:22px;font-weight:400;color:#111;transform:scaleX(1.2030);">Completed</span><svg style="left:2120.5px;top:1123.8px" width="32" height="31" viewBox="0 0 32 31"><path d="M1.8 29.8 H29.4" fill="none" stroke="#5b6787" stroke-width="2.35" stroke-linecap="round"/><path d="M1.8 29.6 V22 a1.2 1.2 0 0 1 .35 -.85 L21.2 2 a1.1 1.1 0 0 1 1.6 0 L30.1 9.3 a1.1 1.1 0 0 1 0 1.6 L11.4 29.6 M16.3 6.6 L25.3 15.6" fill="none" stroke="#5b6787" stroke-width="2.35" stroke-linejoin="round" stroke-linecap="round"/></svg><svg style="left:2187.2px;top:1126.2px" width="27.8" height="27.9" viewBox="0 0 26.3 26.6" preserveAspectRatio="none"><path d="M1 5.4 H25.3 V24.1 a1.5 1.5 0 0 1 -1.5 1.5 H2.5 a1.5 1.5 0 0 1 -1.5 -1.5Z M1 5.4 L3 1.6 a1 1 0 0 1 .9 -.6 H22.4 a1 1 0 0 1 .9 .6 L25.3 5.4" fill="none" stroke="#33446f" stroke-width="2.1" stroke-linejoin="round"/><path d="M13.15 9.3 V21.2 M8.2 16.4 L13.15 21.4 L18.1 16.4" fill="none" stroke="#4a5a82" stroke-width="2.05" stroke-linecap="round" stroke-linejoin="round"/></svg><div class="a" style="left:2253.0px;top:1137.9px;width:4.8px;height:4.8px;border-radius:50%;background:#7d86a2"></div><div class="a" style="left:2263.4px;top:1137.9px;width:4.8px;height:4.8px;border-radius:50%;background:#7d86a2"></div><div class="a" style="left:2273.7px;top:1137.9px;width:4.8px;height:4.8px;border-radius:50%;background:#7d86a2"></div><div class="sep" style="top:1191.7px"></div><div class="cb" style="left:471.4px;top:1230.7px"></div><span class="t" style="left:536.20px;top:1231.28px;font-size:24px;font-weight:400;color:#4a6ee0;transform:scaleX(1.1187);text-decoration:underline;text-decoration-thickness:1.3px;text-underline-offset:2px;text-decoration-color:#6b87ec;"># 002</span><span class="t" style="left:747.47px;top:1231.51px;font-size:23.5px;font-weight:400;color:#151515;transform:scaleX(1.0272);">10:12 2024-09-05</span><span class="t" style="left:1068.80px;top:1232.30px;font-size:21.5px;font-weight:400;color:#151515;transform:scaleX(1.1998);">Daniel</span><span class="t" style="left:1240.30px;top:1232.30px;font-size:21.5px;font-weight:400;color:#151515;transform:scaleX(1.1984);">Male</span><span class="t" style="left:1404.79px;top:1232.30px;font-size:21.5px;font-weight:400;color:#151515;transform:scaleX(1.2052);">Cough</span><div class="badge" style="top:1221.8px"></div><span class="t" style="left:1908.40px;top:1232.48px;font-size:22px;font-weight:400;color:#111;transform:scaleX(1.2030);">Completed</span><svg style="left:2120.5px;top:1226.8px" width="32" height="31" viewBox="0 0 32 31"><path d="M1.8 29.8 H29.4" fill="none" stroke="#5b6787" stroke-width="2.35" stroke-linecap="round"/><path d="M1.8 29.6 V22 a1.2 1.2 0 0 1 .35 -.85 L21.2 2 a1.1 1.1 0 0 1 1.6 0 L30.1 9.3 a1.1 1.1 0 0 1 0 1.6 L11.4 29.6 M16.3 6.6 L25.3 15.6" fill="none" stroke="#5b6787" stroke-width="2.35" stroke-linejoin="round" stroke-linecap="round"/></svg><svg style="left:2187.2px;top:1229.2px" width="27.8" height="27.9" viewBox="0 0 26.3 26.6" preserveAspectRatio="none"><path d="M1 5.4 H25.3 V24.1 a1.5 1.5 0 0 1 -1.5 1.5 H2.5 a1.5 1.5 0 0 1 -1.5 -1.5Z M1 5.4 L3 1.6 a1 1 0 0 1 .9 -.6 H22.4 a1 1 0 0 1 .9 .6 L25.3 5.4" fill="none" stroke="#33446f" stroke-width="2.1" stroke-linejoin="round"/><path d="M13.15 9.3 V21.2 M8.2 16.4 L13.15 21.4 L18.1 16.4" fill="none" stroke="#4a5a82" stroke-width="2.05" stroke-linecap="round" stroke-linejoin="round"/></svg><div class="a" style="left:2253.0px;top:1240.9px;width:4.8px;height:4.8px;border-radius:50%;background:#7d86a2"></div><div class="a" style="left:2263.4px;top:1240.9px;width:4.8px;height:4.8px;border-radius:50%;background:#7d86a2"></div><div class="a" style="left:2273.7px;top:1240.9px;width:4.8px;height:4.8px;border-radius:50%;background:#7d86a2"></div><div class="sep" style="top:882.7px"></div><svg style="left:0;top:0;z-index:5" width="2374" height="1232" viewBox="0 0 2374 1232"><ellipse cx="570.5" cy="976.5" rx="92.6" ry="248.5" fill="none" stroke="#000" stroke-width="5.6"/></svg><div class="a" style="left:410px;top:1190px;width:1964px;height:42px;z-index:6;background:linear-gradient(180deg,rgba(0,0,0,0),rgba(0,0,0,.068))"></div><div class="a" style="left:0;top:1190px;width:410px;height:42px;z-index:6;background:linear-gradient(180deg,rgba(0,0,0,0),rgba(0,0,0,.05))"></div><div class="a" style="left:2311px;top:522.6px;width:80px;height:63.2px;border-radius:10.5px;background:#141827;border:1.3px solid #020308;z-index:7"></div><div class="a" style="left:2325.2px;top:533.6px;width:41.4px;height:41.4px;border-radius:9px;background:#4d6fe9;border:1px solid #05070f;z-index:8"></div><svg style="left:2333.8px;top:544px;z-index:9" width="23.8" height="20.9" viewBox="0 0 65 57"><path d="M32.5 57 L5.1 29.8 A17.3 17.3 0 1 1 32.5 9.3 Z" fill="#fff"/><path d="M32.5 57 L59.9 29.8 A17.3 17.3 0 1 0 32.5 9.3 Z" fill="#e3e9fa"/><path d="M12 25 H22 L25 20 L30 31 L33 24.5 H40" fill="none" stroke="#4d6fe9" stroke-width="3.2" stroke-linecap="round" stroke-linejoin="round"/></svg><div class="a" style="left:2351.1px;top:558.7px;width:16px;height:16px;border-radius:50%;background:#e3e9fb;z-index:10"></div><svg style="left:2351.1px;top:558.7px;z-index:11" width="16" height="16" viewBox="0 0 16 16"><rect x="6.5" y="3.7" width="3" height="6" rx="1.5" fill="#4d6fe9"/><path d="M5 8 a3 3 0 0 0 6 0 M8 11 V12.4" fill="none" stroke="#5c7bea" stroke-width="1" stroke-linecap="round"/></svg><div class="a" style="left:2302.9px;top:1173.2px;width:66.6px;height:52px;border-radius:25px 4px 25px 25px;background:#63c466;z-index:7;box-shadow:0 3px 6px rgba(0,0,0,.25)"></div><svg style="left:2319px;top:1186px;z-index:8" width="26" height="26" viewBox="0 0 26 26" fill="none" stroke="#3b4672" stroke-width="2.4" stroke-linecap="round"><circle cx="13" cy="13" r="11.4"/><path d="M9.4 10.6 a3.7 3.7 0 1 1 5.5 3.2 q-1.8 1 -1.8 2.1" stroke-width="2.6"/><circle cx="13" cy="19.3" r="1.5" fill="#3b4672" stroke="none"/></svg>
</div>
</body></html>
